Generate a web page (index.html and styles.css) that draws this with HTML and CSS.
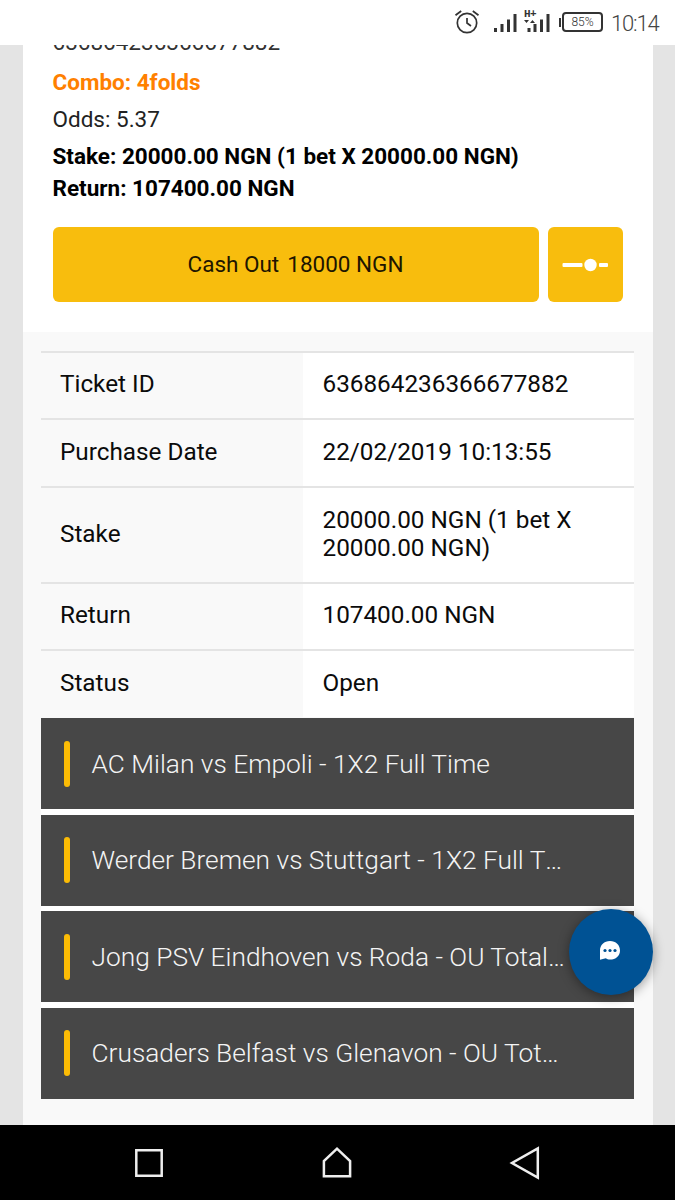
FILE: index.html
```html
<!DOCTYPE html>
<html lang="en">
<head>
<meta charset="utf-8">
<title>Ticket</title>
<link rel="stylesheet" href="styles.css">
</head>
<body>
<div class="phone">
  <header class="status-bar">
    <svg class="alarm" width="26" height="26" viewBox="0 0 26 26" fill="none" stroke="#333" stroke-width="1.7">
      <circle cx="13" cy="14" r="9.7"/>
      <path d="M13 9v5l4 3M1.500 6.300 7.200 2M18.800 2l5.700 4.300"/>
    </svg>
    <svg class="signal" width="24" height="20" viewBox="0 0 24 20" fill="#333">
      <path d="M0 15h3v4H0zM6.500 11h3v8h-3zM13 6.500h3V19h-3zM19.500 1h3v18h-3z"/>
    </svg>
    <div class="data">
      <span class="data-type">H+</span>
      <svg width="29" height="24" viewBox="0 0 29 24" fill="#333">
        <path d="M3.500 19h3v4h-3zM9.500 15h3v8h-3zM16 10.500h3V23h-3zM22.500 5h3v18h-3zM0 11h5l-2.500 3zM6 14h5l-2.500-3z"/>
      </svg>
    </div>
    <div class="battery"><span class="battery-body">85%</span></div>
    <time class="clock">10:14</time>
  </header>

  <main class="page">
    <article class="ticket">
      <section class="summary">
        <p class="number"><span>636864236366677882</span></p>
        <p class="combo"><span>Combo: 4folds</span></p>
        <p class="odds"><span>Odds: 5.37</span></p>
        <p class="strong"><span>Stake: 20000.00 NGN (1 bet X 20000.00 NGN)</span></p>
        <p class="strong"><span>Return: 107400.00 NGN</span></p>
        <div class="actions">
          <button class="cashout"><span>Cash Out</span><span>18000 NGN</span></button>
          <button class="slider" aria-label="Partial cash out">
            <svg width="46" height="14" viewBox="0 0 46 14" fill="#fff">
              <rect x="0.500" y="5" width="20" height="4" rx="1"/>
              <circle cx="28.500" cy="7" r="6.200"/>
              <rect x="37" y="5" width="9" height="4" rx="1"/>
            </svg>
          </button>
        </div>
      </section>
      <section class="details">
        <dl class="table">
          <div class="row"><dt>Ticket ID</dt><dd>636864236366677882</dd></div>
          <div class="row"><dt>Purchase Date</dt><dd>22/02/2019 10:13:55</dd></div>
          <div class="row tall"><dt>Stake</dt><dd>20000.00 NGN (1 bet X<br>20000.00 NGN)</dd></div>
          <div class="row"><dt>Return</dt><dd>107400.00 NGN</dd></div>
          <div class="row"><dt>Status</dt><dd>Open</dd></div>
        </dl>
        <ul class="matches">
          <li class="match"><span>AC Milan vs Empoli - 1X2 Full Time</span></li>
          <li class="match"><span>Werder Bremen vs Stuttgart - 1X2 Full T<span class="more">…</span></span></li>
          <li class="match"><span>Jong PSV Eindhoven vs Roda - OU Total<span class="more">…</span></span></li>
          <li class="match"><span>Crusaders Belfast vs Glenavon - OU Tot<span class="more">…</span></span></li>
        </ul>
      </section>
    </article>
    <button class="chat" aria-label="Chat">
      <svg width="20" height="19" viewBox="0 0 20 19">
        <path fill="#fff" d="M10 0C15.800 0 20 4 20 9.400S15.800 18.500 10 18.500C8.200 18.500 7 18.200 5.800 17.300L0 18.800V9.400C0 4 4.200 0 10 0z"/>
        <g fill="#005294"><circle cx="5" cy="9.500" r="1.600"/><circle cx="10" cy="9.500" r="1.600"/><circle cx="15" cy="9.500" r="1.600"/></g>
      </svg>
    </button>
  </main>

  <nav class="nav-bar">
    <svg width="32" height="34" viewBox="0 0 32 34"><path d="M3.300 4.300h25.400v25.400H3.300z"/></svg>
    <svg width="32" height="34" viewBox="0 0 32 34"><path d="M2.900 30.200V15L16 2.700 29.100 15v15.200z"/></svg>
    <svg width="32" height="34" viewBox="0 0 32 34"><path d="M28.800 2.500v29L3 17z"/></svg>
  </nav>
</div>
</body>
</html>
```
FILE: styles.css
```css
* { box-sizing: border-box; }
body { margin: 0; font-family: Roboto, "Liberation Sans", sans-serif; color: #111; }
p, dl, dd, ul { margin: 0; padding: 0; }
button { border: 0; padding: 0; font: inherit; color: inherit; }
svg { display: block; }

.phone { width: 675px; height: 1200px; display: flex; flex-direction: column; overflow: hidden; }

.status-bar { height: 45px; flex: none; display: flex; align-items: flex-start; padding: 9px 0 0 454px; background: #fff; color: #333; }
.signal { margin: 4px 0 0 14px; }
.data { position: relative; margin-left: 6px; }
.data-type { position: absolute; left: 0; top: -1px; font: bold 11px/12px "Liberation Mono", monospace; letter-spacing: -.5px; }
.battery { display: flex; align-items: center; margin: 3px 0 0 6px; }
.battery::before { content: ""; width: 2px; height: 9px; background: #333; }
.battery-body { width: 41px; height: 20px; margin-left: 1px; border: 2px solid #333; border-radius: 4px; text-align: center; font: 300 12px/16px Roboto, sans-serif; }
.clock { margin: 3px 0 0 8px; font: 300 22px/24px Roboto, sans-serif; letter-spacing: -1.200px; color: #444; white-space: nowrap; }

.page { position: relative; height: 1080px; flex: none; padding: 0 22.500px; background: #e4e4e4; overflow: hidden; }
.ticket { height: 1080px; background: #f9f9f9; }
.summary { height: 287px; padding: 0 30px; background: #fff; font-size: 22.500px; overflow: hidden; }
.summary p { white-space: nowrap; }
.summary .number { margin-top: -22px; height: 41px; line-height: 38px; color: #333; }
.combo { height: 37px; line-height: 37px; color: #ff8000; font-weight: 700; }
.odds { height: 38px; line-height: 36px; color: #222; }
.strong { height: 32px; line-height: 34px; color: #000; font-weight: 700; }
.actions { display: flex; gap: 9px; margin-top: 24px; }
.cashout { display: flex; justify-content: center; align-items: center; gap: 8px; width: 486px; height: 75px; padding-bottom: 2px; border-radius: 6px; background: #f8bd0d; color: #201500; }
.slider { display: grid; place-items: center; width: 75px; height: 75px; border-radius: 6px; background: #f8bd0d; }

.details { padding: 18.500px 18.500px 0; }
.table { font-size: 24.300px; line-height: 28px; color: #0b0b0b; }
.row { display: flex; height: 67.500px; border-top: 2px solid #e4e4e4; white-space: nowrap; }
.row.tall { height: 96px; }
.row dt, .row dd { display: flex; align-items: center; padding-bottom: 2px; }
.row dt { width: 262px; padding-left: 19px; }
.row dd { flex: 1; padding-left: 19.500px; background: #fff; }
.matches { display: flex; flex-direction: column; gap: 5.500px; list-style: none; margin-top: 1.500px; background: #fff; }
.match { display: flex; align-items: center; gap: 22px; height: 91px; padding-left: 23px; background: #474747; color: #f4f4f4; font-size: 26.300px; font-weight: 300; white-space: nowrap; }
.match::before { content: ""; width: 5.500px; height: 46px; border-radius: 3px; background: #fcbc05; }
.more { display: inline-block; }

.chat { position: absolute; left: 569px; top: 864px; width: 84px; height: 86px; display: grid; place-items: center; padding-bottom: 3px; padding-right: 2px; border-radius: 50%; background: #005294; box-shadow: 0 2px 12px rgba(0, 0, 0, .4); }

.nav-bar { height: 75px; flex: none; display: flex; justify-content: center; align-items: center; gap: 156px; padding-right: 1px; background: #000; }
.nav-bar svg { fill: none; stroke: #eee; stroke-width: 2.500; }
```
